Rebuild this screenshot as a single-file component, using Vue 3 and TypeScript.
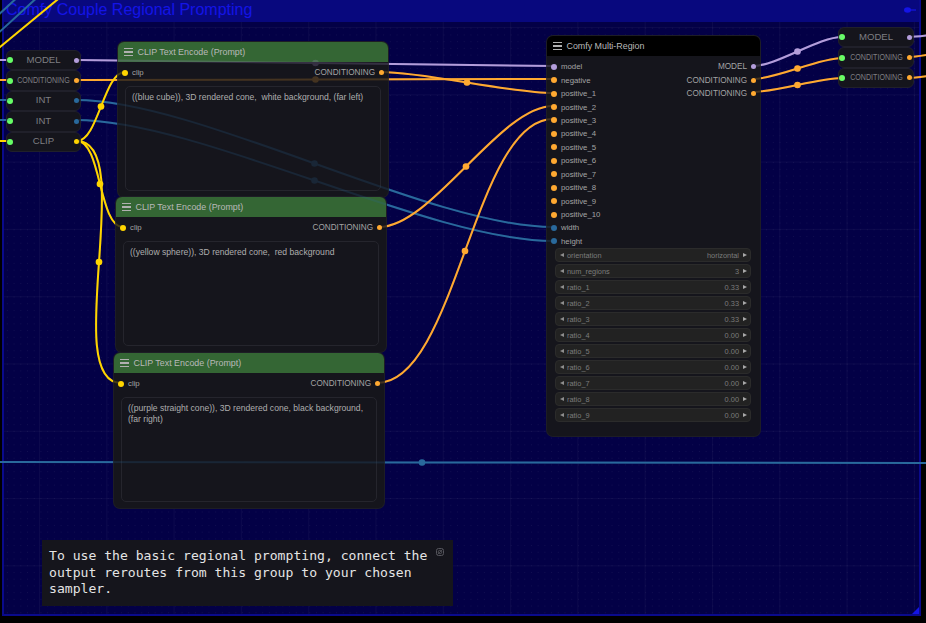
<script setup lang="ts">
type Pt = [number, number]

const PURPLE = '#b39ddb'
const ORANGE = '#ffa931'
const YELLOW = '#ffd500'
const TEAL = '#29699c'

// a link is a bezier with horizontal tangents, same as the comfy canvas draws it
function spline(a: Pt, b: Pt, straight?: boolean) {
  if (straight) return { d: `M${a[0]} ${a[1]}L${b[0]} ${b[1]}`, mx: 0, my: 0 }
  const d = Math.hypot(b[0] - a[0], b[1] - a[1]) * 0.25
  const c1: Pt = [a[0] + d, a[1]]
  const c2: Pt = [b[0] - d, b[1]]
  const mx = (a[0] + 3 * c1[0] + 3 * c2[0] + b[0]) / 8
  const my = (a[1] + 3 * c1[1] + 3 * c2[1] + b[1]) / 8
  return { d: `M${a[0]} ${a[1]}C${c1[0]} ${c1[1]} ${c2[0]} ${c2[1]} ${b[0]} ${b[1]}`, mx, my }
}

const links: { from: Pt; to: Pt; color: string; dot?: boolean; straight?: boolean }[] = [
  { from: [-30, 60], to: [10, 60], color: PURPLE },
  { from: [-30, 80], to: [10, 80], color: ORANGE },
  { from: [-30, 100], to: [10, 100], color: TEAL },
  { from: [-30, 120], to: [10, 120], color: TEAL },
  { from: [-30, 141], to: [9, 141], color: YELLOW },
  { from: [78, 60], to: [553, 66], color: PURPLE, dot: true },
  { from: [78, 80], to: [553, 79], color: ORANGE, dot: true },
  { from: [76, 100], to: [553, 227], color: TEAL, dot: true },
  { from: [76, 120], to: [553, 241], color: TEAL, dot: true },
  { from: [77, 141], to: [125, 72], color: YELLOW, dot: true },
  { from: [77, 141], to: [123, 227], color: YELLOW, dot: true },
  { from: [77, 141], to: [121, 383], color: YELLOW, dot: true },
  { from: [381, 72], to: [553, 93], color: ORANGE, dot: true },
  { from: [379, 227], to: [553, 106], color: ORANGE, dot: true },
  { from: [377, 383], to: [553, 119], color: ORANGE, dot: true },
  { from: [753, 66], to: [842, 37], color: PURPLE, dot: true },
  { from: [753, 79], to: [842, 58], color: ORANGE, dot: true },
  { from: [753, 92], to: [842, 78], color: ORANGE, dot: true },
  { from: [909, 37], to: [960, 32], color: PURPLE },
  { from: [909, 57], to: [960, 50], color: ORANGE },
  { from: [909, 78], to: [960, 72], color: ORANGE },
  { from: [-100, 462], to: [944, 463], color: TEAL, dot: true },
  { from: [-6, 52], to: [63, -5], color: YELLOW, straight: true },
  { from: [-6, 19], to: [21, -6], color: TEAL, straight: true },
  { from: [-6, 37], to: [41, -6], color: TEAL, straight: true },
]

const wires = links.map((l) => ({ ...spline(l.from, l.to, l.straight), color: l.color, dot: l.dot }))

const leftStack = [
  { label: 'MODEL', dot: PURPLE },
  { label: 'CONDITIONING', dot: ORANGE, squeeze: true },
  { label: 'INT', dot: TEAL },
  { label: 'INT', dot: TEAL },
  { label: 'CLIP', dot: YELLOW },
]
const rightStack = [
  { label: 'MODEL', dot: PURPLE },
  { label: 'CONDITIONING', dot: ORANGE, squeeze: true },
  { label: 'CONDITIONING', dot: ORANGE, squeeze: true },
]

const prompts = [
  { x: 118, y: 42, text: '((blue cube)), 3D rendered cone,  white background, (far left)' },
  { x: 116, y: 197, text: '((yellow sphere)), 3D rendered cone,  red background' },
  { x: 114, y: 353, text: '((purple straight cone)), 3D rendered cone, black background, (far right)' },
]

const inputs = [
  { name: 'model', color: PURPLE },
  { name: 'negative', color: ORANGE },
  ...Array.from({ length: 10 }, (_, i) => ({ name: `positive_${i + 1}`, color: ORANGE })),
  { name: 'width', color: TEAL },
  { name: 'height', color: TEAL },
]
const outputs = [
  { name: 'MODEL', color: PURPLE },
  { name: 'CONDITIONING', color: ORANGE },
  { name: 'CONDITIONING', color: ORANGE },
]
const widgets = [
  ['orientation', 'horizontal'],
  ['num_regions', '3'],
  ['ratio_1', '0.33'],
  ['ratio_2', '0.33'],
  ['ratio_3', '0.33'],
  ['ratio_4', '0.00'],
  ['ratio_5', '0.00'],
  ['ratio_6', '0.00'],
  ['ratio_7', '0.00'],
  ['ratio_8', '0.00'],
  ['ratio_9', '0.00'],
]
</script>

<template>
  <div class="canvas">
    <div class="group">
      <div class="group-title">
        <span>Comfy Couple Regional Prompting</span>
        <svg class="pin" width="12" height="8" viewBox="0 0 12 8">
          <ellipse cx="3.5" cy="4" rx="3.5" ry="2.8" fill="#1414e6" />
          <path d="M6 3.4 H12 V4.6 H6 Z" fill="#1414e6" />
        </svg>
      </div>
      <div class="group-corner"></div>
    </div>

    <svg class="wires" width="926" height="623">
      <g v-for="(w, i) in wires" :key="i">
        <path :d="w.d" :stroke="w.color" fill="none" stroke-width="2" />
        <circle v-if="w.dot" :cx="w.mx" :cy="w.my" r="3.3" :fill="w.color" />
      </g>
    </svg>

    <div class="stack left-stack">
      <div v-for="(r, i) in leftStack" :key="i" class="pill">
        <i class="dot green"></i>
        <span class="pill-label"><span :class="{ squeeze: r.squeeze }">{{ r.label }}</span></span>
        <i class="dot small" :style="{ background: r.dot }"></i>
      </div>
    </div>

    <div class="stack right-stack">
      <div v-for="(r, i) in rightStack" :key="i" class="pill">
        <i class="dot green"></i>
        <span class="pill-label"><span :class="{ squeeze: r.squeeze }">{{ r.label }}</span></span>
        <i class="dot small" :style="{ background: r.dot }"></i>
      </div>
    </div>

    <div v-for="p in prompts" :key="p.y" class="node prompt" :style="{ left: p.x + 'px', top: p.y + 'px' }">
      <div class="head green-head">
        <span class="burger"><i></i><i></i><i></i></span>
        <span>CLIP Text Encode (Prompt)</span>
      </div>
      <div class="prompt-slots">
        <div class="slot">
          <i class="dot" :style="{ background: YELLOW }"></i>
          <span>clip</span>
        </div>
        <div class="slot out">
          <span>CONDITIONING</span>
          <i class="dot small" :style="{ background: ORANGE }"></i>
        </div>
      </div>
      <div class="textbox">{{ p.text }}</div>
    </div>

    <div class="node multi">
      <div class="head black-head">
        <span class="burger"><i></i><i></i><i></i></span>
        <span>Comfy Multi-Region</span>
      </div>
      <div class="multi-slots">
        <div>
          <div v-for="s in inputs" :key="s.name" class="slot">
            <i class="dot" :style="{ background: s.color }"></i>
            <span>{{ s.name }}</span>
          </div>
        </div>
        <div>
          <div v-for="(s, i) in outputs" :key="i" class="slot out">
            <span>{{ s.name }}</span>
            <i class="dot small" :style="{ background: s.color }"></i>
          </div>
        </div>
      </div>
      <div class="widgets">
        <div v-for="w in widgets" :key="w[0]" class="widget">
          <i class="arrow-l"></i>
          <span class="w-name">{{ w[0] }}</span>
          <span class="w-val">{{ w[1] }}</span>
          <i class="arrow-r"></i>
        </div>
      </div>
    </div>

    <svg class="wires faint" width="926" height="623">
      <g v-for="(w, i) in wires" :key="i">
        <path :d="w.d" :stroke="w.color" fill="none" stroke-width="2" />
        <circle v-if="w.dot" :cx="w.mx" :cy="w.my" r="3.3" :fill="w.color" />
      </g>
    </svg>

    <div class="note">
      To use the basic regional prompting, connect the output reroutes from this group to your chosen sampler.
      <svg class="note-icon" width="8" height="8" viewBox="0 0 8 8">
        <rect x="0.5" y="0.5" width="7" height="7" rx="2" fill="none" stroke="#55555c" stroke-width="1" />
        <circle cx="4" cy="4" r="1.8" fill="none" stroke="#55555c" stroke-width="0.8" />
        <path d="M1.5 6.5 L6.5 1.5" stroke="#55555c" stroke-width="0.8" />
      </svg>
    </div>
  </div>
</template>

<style scoped>
.canvas {
  position: relative;
  width: 926px;
  height: 623px;
  overflow: hidden;
  background-color: #000;
  font-family: 'Liberation Sans', Arial, sans-serif;
}

.group {
  position: absolute;
  left: 2px;
  top: -2px;
  width: 919px;
  height: 618px;
  box-sizing: border-box;
  border: 2px solid #0a0a8c;
  border-top: 0;
  background-color: #030046;
  background-image:
    linear-gradient(90deg, rgba(255, 255, 255, 0.035) 1px, transparent 1px),
    linear-gradient(rgba(255, 255, 255, 0.035) 1px, transparent 1px),
    radial-gradient(circle, rgba(255, 255, 255, 0.06) 0.6px, transparent 0.8px);
  background-size: 67.3px 67.3px, 67.3px 67.3px, 6.73px 6.73px;
  background-position: 35px 0, 0 29px, 0 0;
}

.group-title {
  display: flex;
  align-items: center;
  justify-content: space-between;
  box-sizing: border-box;
  height: 24px;
  padding: 0 0 0 2px;
  background: #08087e;
  color: #1414e6;
  font-size: 16px;
  line-height: 22px;
}

.group-corner {
  position: absolute;
  right: 0;
  bottom: 0;
  width: 0;
  height: 0;
  border-left: 7px solid transparent;
  border-bottom: 7px solid #1414e6;
}

.pin {
  margin-right: 3px;
}

.wires {
  position: absolute;
  left: 0;
  top: 0;
  pointer-events: none;
}

.faint {
  opacity: 0.2;
}

.stack {
  position: absolute;
  display: flex;
  flex-direction: column;
}

.left-stack {
  left: 6px;
  top: 50px;
  width: 75px;
}

.right-stack {
  left: 838px;
  top: 27px;
  width: 76px;
}

.pill {
  display: flex;
  align-items: center;
  justify-content: space-between;
  box-sizing: border-box;
  height: 20.4px;
  padding: 0 1px 0 0;
  background: #15151c;
  border: 1px solid #20202a;
  border-radius: 6px;
}

.pill-label {
  flex: 1;
  text-align: center;
  color: #7e7e82;
  font-size: 9.6px;
  white-space: nowrap;
  min-width: 0;
  display: flex;
  justify-content: center;
  margin-top: -2px;
}

.squeeze {
  display: inline-block;
  transform: scaleX(0.74);
}

.dot {
  flex: none;
  display: block;
  width: 6px;
  height: 6px;
  border-radius: 50%;
}

.dot.small {
  width: 5px;
  height: 5px;
}

.dot.green {
  background: #66ff66;
}

.node {
  position: absolute;
  display: flex;
  flex-direction: column;
  box-sizing: border-box;
  background: #15151c;
  border-radius: 6px;
  box-shadow: 0 0 0 1px #1d1d25;
}

.prompt {
  width: 270px;
  height: 155px;
}

.head {
  display: flex;
  align-items: center;
  gap: 4.5px;
  flex: none;
  height: 20px;
  padding-left: 6px;
  border-radius: 6px 6px 0 0;
  color: #b9b9b9;
  font-size: 8.9px;
}

.green-head {
  background: #346634;
}

.black-head {
  background: #000;
}

.burger {
  display: flex;
  flex-direction: column;
  gap: 2.2px;
  width: 9px;
}

.burger i {
  display: block;
  height: 1.3px;
  background: #b0b0b0;
}

.prompt-slots {
  display: flex;
  justify-content: space-between;
  flex: none;
  margin-top: 4px;
}

.slot {
  display: flex;
  align-items: center;
  gap: 4px;
  height: 13.45px;
  padding: 0 4px;
  color: #a4a4a4;
  font-size: 7.8px;
  white-space: nowrap;
}

.slot.out {
  justify-content: flex-end;
  padding-right: 4px;
  font-size: 8.2px;
}

.textbox {
  flex: 1;
  box-sizing: border-box;
  margin: 7px 7px 6px;
  padding: 5px 6px;
  border: 1px solid #25252d;
  border-radius: 5px;
  color: #aeaeae;
  font-size: 8.6px;
  line-height: 10.5px;
  white-space: pre-wrap;
}

.multi {
  left: 547px;
  top: 36px;
  width: 213px;
  height: 400px;
}

.multi-slots {
  display: flex;
  justify-content: space-between;
  flex: none;
  margin-top: 4px;
}

.widgets {
  display: flex;
  flex-direction: column;
  gap: 2px;
  margin: 0 9px 0 8px;
}

.widget {
  display: flex;
  align-items: center;
  box-sizing: border-box;
  height: 14px;
  padding: 0 3px 0 4px;
  background: #222222;
  border: 1px solid #2b2b2b;
  border-radius: 4px;
  color: #7c7c7c;
  font-size: 7.4px;
}

.w-name {
  flex: 1;
  margin-left: 3px;
}

.w-val {
  margin-right: 4px;
}

.arrow-l,
.arrow-r {
  width: 0;
  height: 0;
  border-top: 2.5px solid transparent;
  border-bottom: 2.5px solid transparent;
}

.arrow-l {
  border-right: 4px solid #8e8e8e;
}

.arrow-r {
  border-left: 4px solid #a8a8a8;
}

.note {
  position: absolute;
  left: 42px;
  top: 540px;
  box-sizing: border-box;
  width: 411px;
  height: 66px;
  padding: 8px 24px 0 7px;
  background: #15151c;
  color: #e4e4e4;
  font-family: 'DejaVu Sans Mono', monospace;
  font-size: 13.1px;
  line-height: 16.7px;
}

.note-icon {
  position: absolute;
  right: 9px;
  top: 8px;
}
</style>

<style>
html,
body {
  background: #000;
  overflow: hidden;
}
</style>
